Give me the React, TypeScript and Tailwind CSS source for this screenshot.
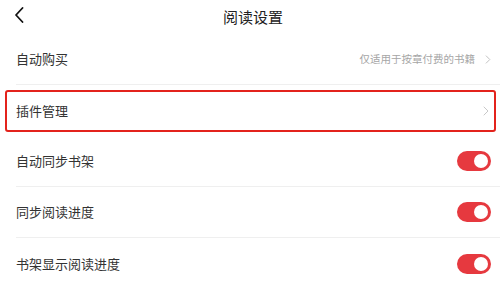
import React from 'react';

const font = { fontFamily: '"Noto Sans CJK SC", "Noto Sans", sans-serif' };

const Chevron: React.FC<{ className?: string }> = ({ className }) => (
  <svg className={className} viewBox="0 0 6 10" fill="none">
    <path d="M1 1l4 4-4 4" stroke="currentColor" strokeWidth="1" strokeLinecap="round" strokeLinejoin="round" />
  </svg>
);

const Toggle: React.FC = () => (
  <div className="flex h-[20px] w-[34px] items-center justify-end rounded-full bg-[#e6393f] pr-[3px]">
    <div className="h-[14px] w-[14px] rounded-full bg-white" />
  </div>
);

const Row: React.FC<{ label: string; children?: React.ReactNode; divider?: boolean }> = ({ label, children, divider = true }) => (
  <div className="pl-4">
    <div className={`flex h-[51px] items-center justify-between pr-[9px] ${divider ? 'border-b border-[#efefef]' : ''}`}>
      <span className="text-[13px] text-[#333]">{label}</span>
      {children}
    </div>
  </div>
);

export default function App() {
  return (
    <div className="relative h-[282px] w-[500px] overflow-hidden bg-white" style={font}>
      {/* header */}
      <div className="relative flex h-[34px] items-center justify-center">
        <svg className="absolute left-[14px] top-[7px] h-[16px] w-[10px]" viewBox="0 0 10 16" fill="none">
          <path d="M8.5 1L2 8l6.5 7" stroke="#111" strokeWidth="1.8" strokeLinecap="round" strokeLinejoin="round" />
        </svg>
        <span className="ml-[6px] text-[15px] text-[#222]">阅读设置</span>
      </div>

      <Row label="自动购买">
        <div className="flex items-center gap-[10px]">
          <span className="text-[10.5px] text-[#a6a6a6]">仅适用于按章付费的书籍</span>
          <Chevron className="h-[9px] w-[6px] text-[#bbb]" />
        </div>
      </Row>

      <div className="relative">
        <Row label="插件管理" divider={false}>
          <Chevron className="mr-[2px] h-[10px] w-[6px] text-[#c8c8c8]" />
        </Row>
        <div className="pointer-events-none absolute left-[5px] right-[4px] top-[5px] bottom-[4px] rounded-[3px] border-2 border-[#e3231c]" />
      </div>

      <Row label="自动同步书架">
        <Toggle />
      </Row>
      <Row label="同步阅读进度">
        <Toggle />
      </Row>
      <Row label="书架显示阅读进度" divider={false}>
        <Toggle />
      </Row>
    </div>
  );
}
